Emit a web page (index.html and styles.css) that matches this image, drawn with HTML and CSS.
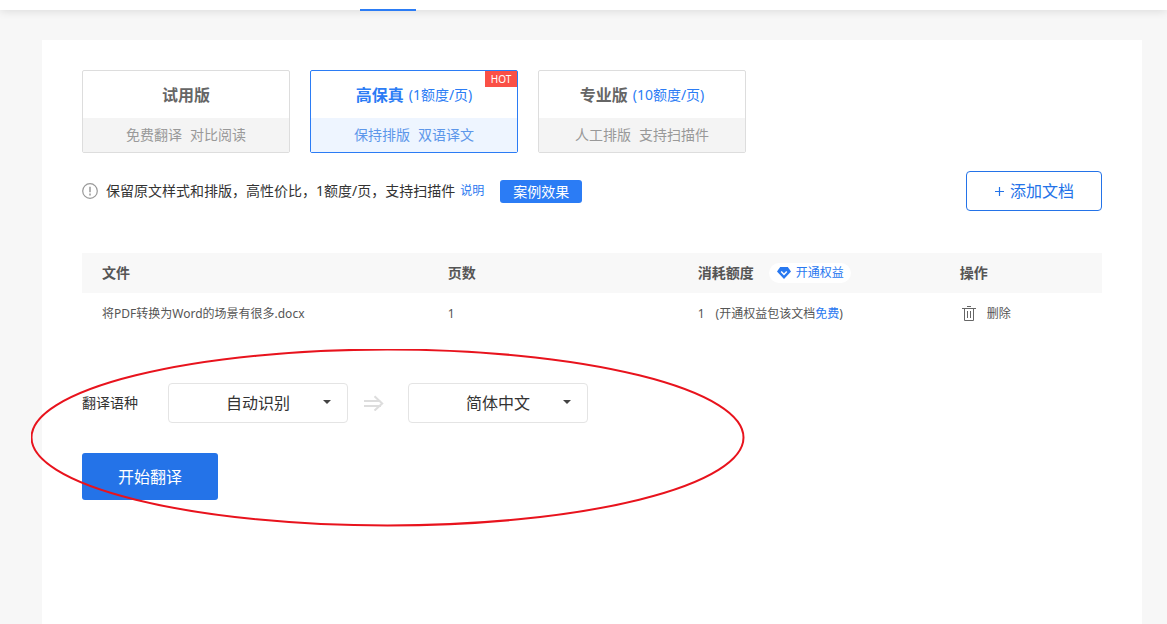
FILE: index.html
```html
<!DOCTYPE html>
<html lang="zh-CN">
<head>
<meta charset="utf-8">
<meta name="viewport" content="width=device-width, initial-scale=1">
<title>文档翻译</title>
<link rel="stylesheet" href="styles.css">
</head>
<body>
<header class="topbar"><span class="topbar-active"></span></header>
<main class="panel">
  <div class="plans">
    <button type="button" class="plan">
      <span class="plan-title"><strong>试用版</strong></span>
      <span class="plan-note"><span>免费翻译</span><span>对比阅读</span></span>
    </button>
    <button type="button" class="plan plan-selected" aria-pressed="true">
      <span class="plan-title"><strong>高保真</strong><span class="plan-price">(1额度/页)</span></span>
      <span class="plan-note"><span>保持排版</span><span>双语译文</span></span>
      <span class="hot">HOT</span>
    </button>
    <button type="button" class="plan">
      <span class="plan-title"><strong>专业版</strong><span class="plan-price">(10额度/页)</span></span>
      <span class="plan-note"><span>人工排版</span><span>支持扫描件</span></span>
    </button>
  </div>

  <div class="info">
    <svg class="info-icon" viewBox="0 0 16 16" aria-hidden="true"><circle cx="8" cy="8" r="7.3" fill="none" stroke="#999" stroke-width="1.2"/><path d="M8 3.8v5.4M8 10.6v1.8" stroke="#999" stroke-width="1.5"/></svg>
    <p class="info-text">保留原文样式和排版，高性价比，1额度/页，支持扫描件</p>
    <a class="info-link" href="#">说明</a>
    <a class="demo" href="#">案例效果</a>
    <button type="button" class="add"><svg class="plus" viewBox="0 0 10 10" aria-hidden="true"><path d="M1 5.5h9M5.5 1v9" stroke="currentColor" stroke-width="1.2"/></svg>添加文档</button>
  </div>

  <table class="files">
    <colgroup><col class="col-file"><col class="col-pages"><col class="col-cost"><col></colgroup>
    <thead>
      <tr>
        <th>文件</th>
        <th>页数</th>
        <th><div class="cost-head">消耗额度<a class="benefit" href="#"><svg class="gem" viewBox="0 0 14 12" aria-hidden="true"><path d="M3.2 0h7.6L14 4.4 7 12 0 4.4z" fill="#2878f0"/><path d="M4.2 4.4 7 7.4l2.8-3" fill="none" stroke="#fff" stroke-width="1.5"/></svg>开通权益</a></div></th>
        <th>操作</th>
      </tr>
    </thead>
    <tbody>
      <tr>
        <td>将PDF转换为Word的场景有很多.docx</td>
        <td>1</td>
        <td><div class="cost"><span>1</span><span>(开通权益包该文档<a href="#">免费</a>)</span></div></td>
        <td><button type="button" class="delete"><svg class="trash" viewBox="0 0 14 16" aria-hidden="true"><path d="M0 2.5h14M5 .5h4M2.5 2.5v12h9v-12M5.5 5v7M8.5 5v7" fill="none" stroke="#666"/></svg>删除</button></td>
      </tr>
    </tbody>
  </table>

  <form class="translate">
    <div class="languages">
      <label class="lang-label" for="source">翻译语种</label>
      <div class="select">
        <select id="source"><option>自动识别</option></select>
        <span class="caret"></span>
      </div>
      <svg class="arrow" viewBox="0 0 20 16" aria-hidden="true"><path d="M0 6h16.500M0 11h17M10.500 1.200 18.200 8.500 10.500 15.600" fill="none" stroke="#ddd" stroke-width="2"/></svg>
      <div class="select">
        <select id="target" aria-label="目标语言"><option>简体中文</option></select>
        <span class="caret"></span>
      </div>
    </div>
    <button type="button" class="start">开始翻译</button>
    <svg class="annotation" viewBox="0 0 714 178" aria-hidden="true"><ellipse cx="356.500" cy="88.500" rx="356" ry="88" fill="none" stroke="#e8131d" stroke-width="2"/></svg>
  </form>
</main>
</body>
</html>
```
FILE: styles.css
```css
* { box-sizing: border-box; }

body {
  margin: 0;
  min-height: 100vh;
  display: flex;
  flex-direction: column;
  background: #f7f7f7;
  color: #333;
  font: 14px/20px "Noto Sans", "Noto Sans CJK SC", sans-serif;
}

a { color: #2878f0; text-decoration: none; }

button, select { font: inherit; cursor: pointer; }

.topbar {
  height: 10px;
  padding-left: 360px;
  background: #fff;
  box-shadow: 0 1px 10px rgba(0, 0, 0, .12);
}

.topbar-active {
  display: block;
  width: 56px;
  height: 11px;
  border-bottom: 2px solid #2b7cf5;
}

.panel {
  flex: 1;
  margin: 30px 25px 0 42px;
  padding: 30px 40px;
  background: #fff;
}

.plans { display: flex; gap: 20px; }

.plan {
  position: relative;
  width: 208px;
  padding: 0;
  border: 1px solid #ddd;
  border-radius: 2px;
  background: #fff;
  color: #666;
}

.plan-title {
  display: flex;
  align-items: center;
  justify-content: center;
  gap: 5px;
  height: 47px;
}

.plan-title strong { font-size: 16px; }

.plan-price { color: #2b7cf5; }

.plan-note {
  display: flex;
  align-items: center;
  justify-content: center;
  gap: 8px;
  height: 34px;
  background: #f4f4f4;
  color: #999;
}

.plan-selected { border-color: #2b7cf5; color: #2b7cf5; }

.plan-selected .plan-note { background: #eef5ff; color: #5d97ea; }

.hot {
  position: absolute;
  top: 0;
  right: 0;
  width: 32px;
  background: #fa5046;
  color: #fff;
  font-size: 10px;
  line-height: 16px;
}

.info {
  display: flex;
  align-items: center;
  margin-top: 18px;
}

.info-icon { width: 16px; height: 16px; margin-right: 8px; }

.info-text { margin: 0; }

.info-link { margin-left: 5px; font-size: 12px; }

.demo {
  margin-left: 16px;
  padding: 0 13px;
  border-radius: 3px;
  background: #2b7cf5;
  color: #fff;
  line-height: 23px;
}

.add {
  display: flex;
  align-items: center;
  justify-content: center;
  gap: 6px;
  width: 136px;
  height: 40px;
  margin-left: auto;
  border: 1px solid #2473e8;
  border-radius: 4px;
  background: #fff;
  color: #2473e8;
  font-size: 16px;
}

.plus { width: 10px; height: 10px; }

.files {
  width: 100%;
  margin-top: 42px;
  border-collapse: collapse;
  table-layout: fixed;
  color: #555;
}

.col-file { width: 33.9%; }
.col-pages { width: 24.5%; }
.col-cost { width: 25.7%; }

.files th,
.files td {
  height: 40px;
  padding: 0 0 0 20px;
  text-align: left;
}

.files th { background: #f8f8f8; }

.files td { height: 42px; font-size: 12px; }

.cost-head { display: flex; align-items: center; gap: 15px; }

.benefit {
  display: flex;
  align-items: center;
  gap: 5px;
  padding: 0 7px 0 8px;
  border-radius: 10px;
  background: #fff;
  font-size: 12px;
  font-weight: 400;
}

.gem { width: 14px; height: 12px; }

.cost { display: flex; gap: 11px; }

.delete {
  display: flex;
  align-items: center;
  gap: 11px;
  padding: 0 0 0 2px;
  border: 0;
  background: none;
  color: #555;
}

.trash { width: 14px; height: 16px; }

.translate { position: relative; margin-top: 48px; }

.languages { display: flex; align-items: center; }

.lang-label { margin-right: 30px; }

.select { display: grid; align-items: center; width: 180px; }

.select select {
  grid-area: 1 / 1;
  height: 40px;
  padding: 0;
  border: 1px solid #e4e4e4;
  border-radius: 4px;
  background: #fff;
  color: #333;
  font-size: 16px;
  text-align-last: center;
  appearance: none;
}

.caret {
  grid-area: 1 / 1;
  justify-self: end;
  margin: 0 17px 2px 0;
  border: 4px solid transparent;
  border-top-color: #444;
  border-bottom: 0;
  pointer-events: none;
}

.arrow { width: 20px; height: 16px; margin: 0 24px 0 16px; }

.start {
  display: block;
  width: 136px;
  height: 47px;
  margin-top: 30px;
  border: 0;
  border-radius: 3px;
  background: #2473e8;
  color: #fff;
  font-size: 16px;
}

/* highlight ring around the language form */
.annotation {
  position: absolute;
  top: -34px;
  left: -51px;
  width: 714px;
  height: 178px;
  pointer-events: none;
}
```
